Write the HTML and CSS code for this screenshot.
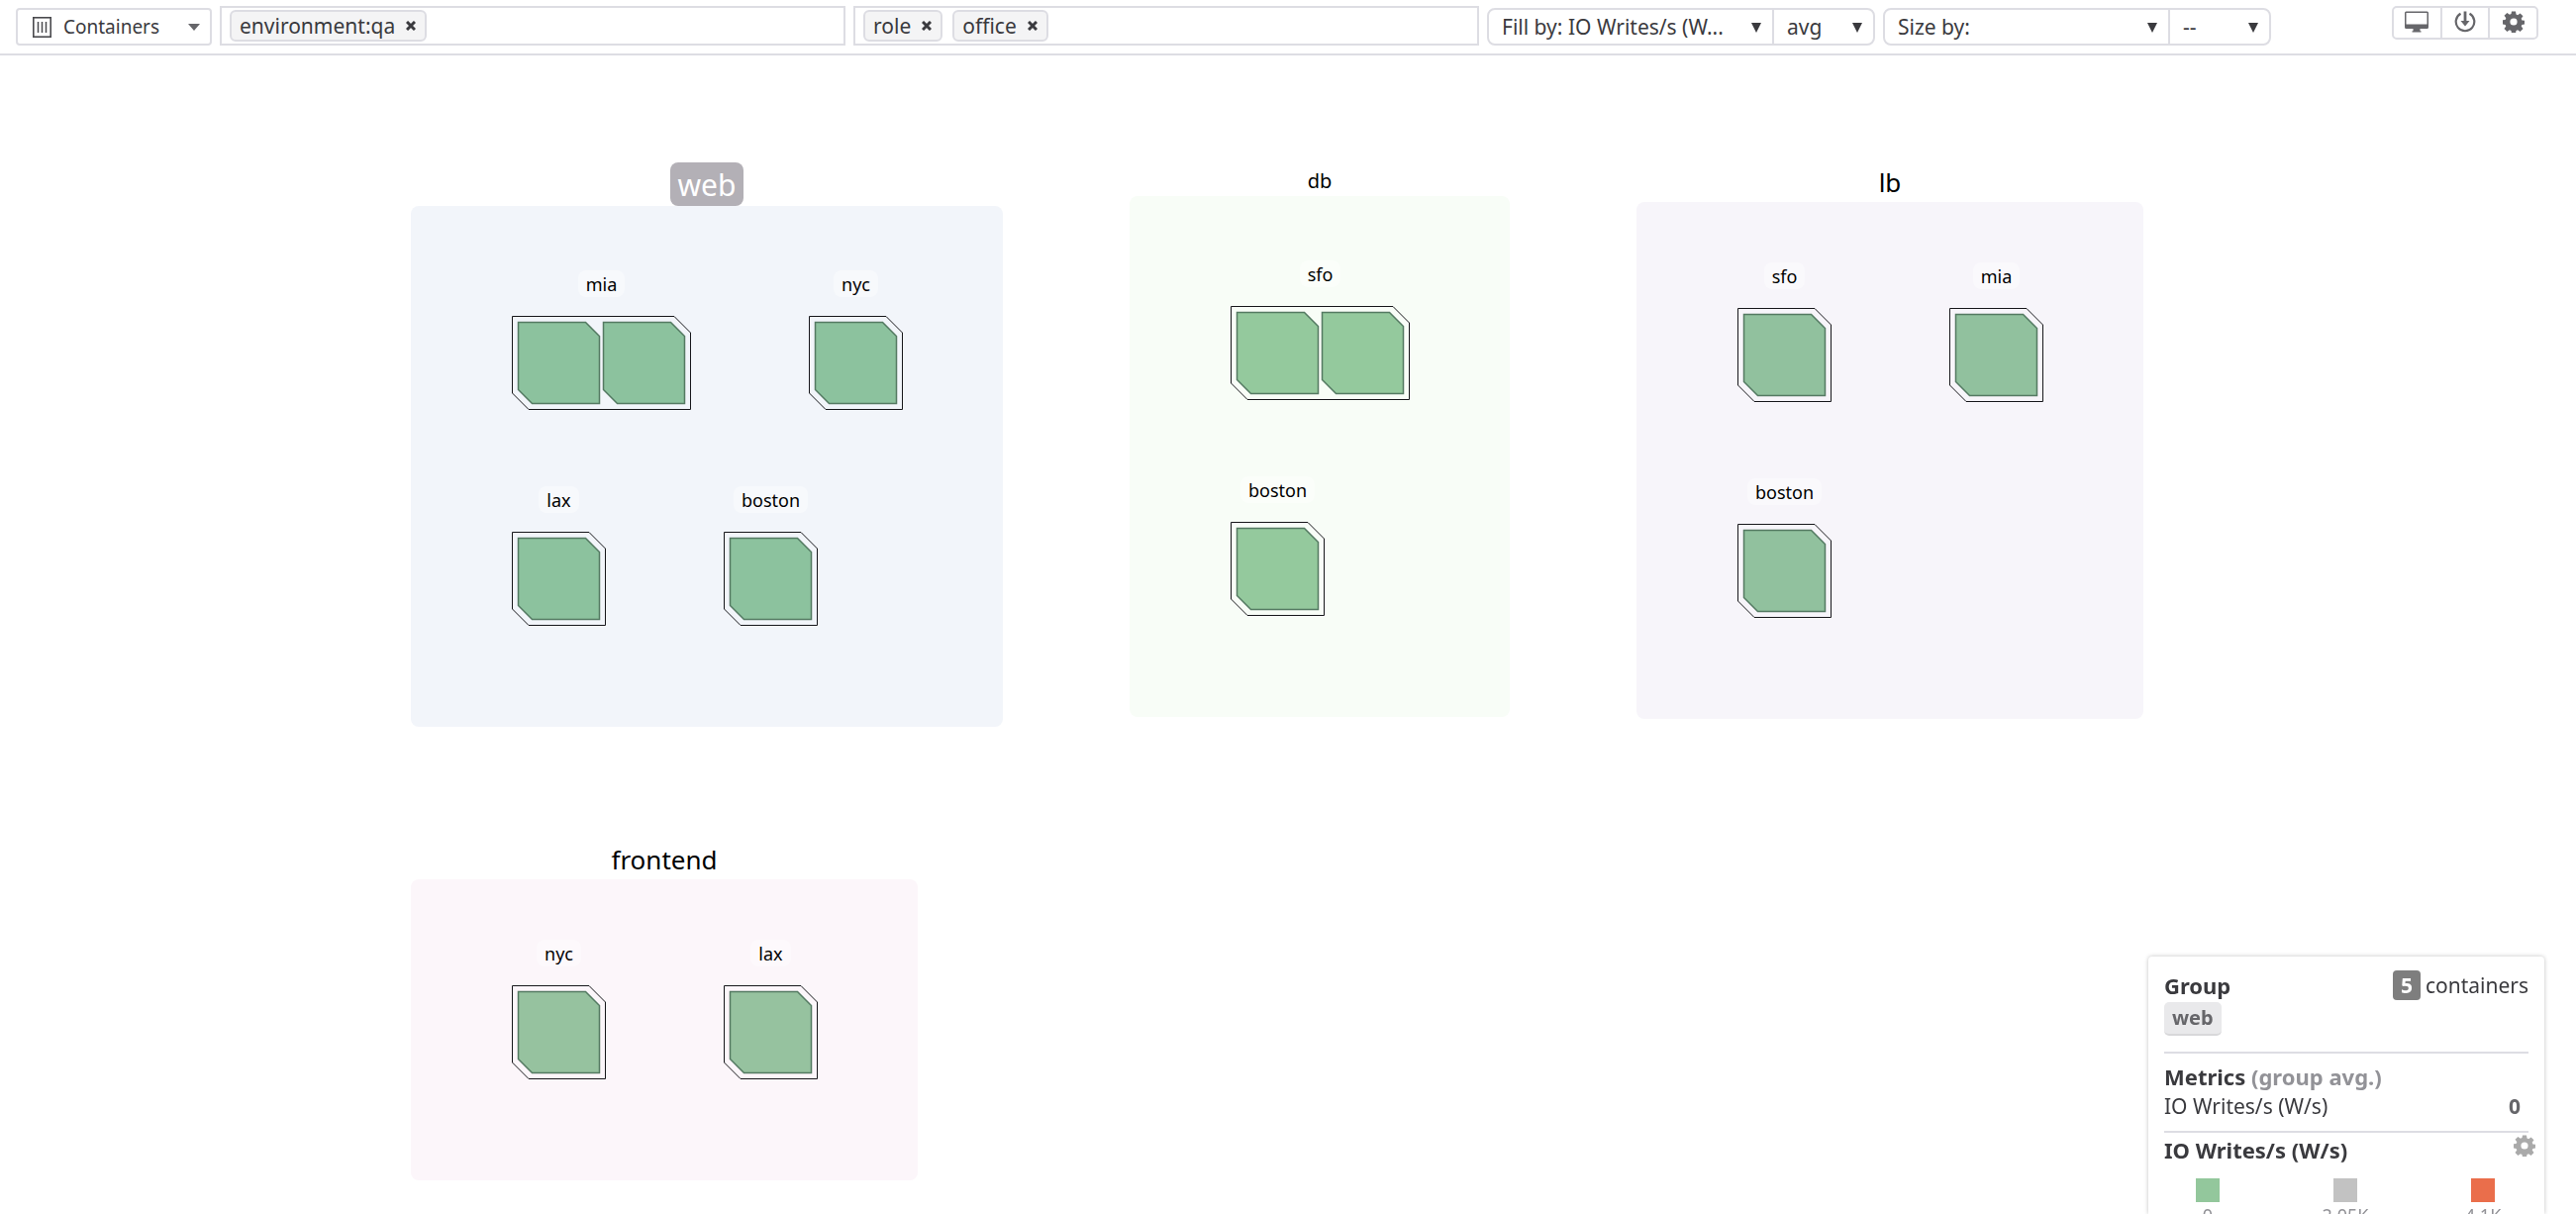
FILE: index.html
```html
<!DOCTYPE html>
<html lang="en">
<head>
<meta charset="utf-8">
<title>Container map</title>
<link rel="stylesheet" href="styles.css">
</head>
<body>
<svg class="defs" aria-hidden="true">
  <symbol id="tile" viewBox="0 0 95 95">
    <path class="frame" d="M.5 .5H78L94.5 17V94.5H17L.5 78Z"/>
    <path class="cell" d="M6.5 6.5H74.5L88.5 20.5V88.5H20.5L6.5 74.5Z"/>
  </symbol>
  <symbol id="tile2" viewBox="0 0 181 95">
    <path class="frame" d="M.5 .5H164L180.5 17V94.5H17L.5 78Z"/>
    <path class="cell" d="M6.5 6.5H74.5L88.5 20.5V88.5H20.5L6.5 74.5ZM92.5 6.5H160.5L174.5 20.5V88.5H106.5L92.5 74.5Z"/>
  </symbol>
  <symbol id="gear" viewBox="0 0 22 22">
    <path fill="currentColor" fill-rule="evenodd" d="M9 .5h4l.5 3 1.6.7 2.5-1.8 2.9 2.9-1.8 2.5.7 1.6 3 .5v3.600l-3 .5-.7 1.600 1.800 2.500-2.900 2.900-2.500-1.800-1.600.7-.5 3H9l-.5-3-1.600-.7-2.500 1.800-2.900-2.900 1.800-2.500-.7-1.600-3-.5V9.400l3-.5.7-1.600-1.800-2.500 2.900-2.900 2.500 1.800 1.600-.7ZM11 7.400a3.600 3.600 0 1 0 0 7.200 3.600 3.600 0 0 0 0-7.200Z"/>
  </symbol>
</svg>

<header class="toolbar">
  <button class="entity" type="button">
    <svg width="19" height="21" viewBox="0 0 19 21" fill="none" stroke="#4a4a4e"><rect x=".8" y=".8" width="17.400" height="19.400" stroke-width="1.600"/><path d="M5.500 5v11M9.500 5v11M13.500 5v11" stroke-width="1.500"/></svg>
    <span class="entity-name">Containers</span>
    <svg width="12" height="7" viewBox="0 0 12 7"><path d="M0 0h12L6 7Z" fill="#66666a"/></svg>
  </button>

  <div class="filter">
    <span class="chip">environment:qa <button type="button" aria-label="Remove environment:qa"><svg width="10" height="10" viewBox="0 0 10 10"><path d="M1 1l8 8M9 1L1 9"/></svg></button></span>
    <input type="text" aria-label="Filter by">
  </div>
  <div class="filter">
    <span class="chip">role <button type="button" aria-label="Remove role"><svg width="10" height="10" viewBox="0 0 10 10"><path d="M1 1l8 8M9 1L1 9"/></svg></button></span>
    <span class="chip">office <button type="button" aria-label="Remove office"><svg width="10" height="10" viewBox="0 0 10 10"><path d="M1 1l8 8M9 1L1 9"/></svg></button></span>
    <input type="text" aria-label="Group by">
  </div>

  <div class="pair">
    <div class="pick metric"><select aria-label="Fill by"><option>Fill by: IO Writes/s (W...</option></select></div>
    <div class="pick"><select aria-label="Fill aggregation"><option>avg</option></select></div>
  </div>
  <div class="pair">
    <div class="pick metric"><select aria-label="Size by"><option>Size by:</option></select></div>
    <div class="pick"><select aria-label="Size aggregation"><option>--</option></select></div>
  </div>

  <div class="actions">
    <button type="button" aria-label="Full screen"><svg width="24" height="22" viewBox="0 0 24 22"><path fill="currentColor" fill-rule="evenodd" d="M1.500 .5h21a1.500 1.500 0 0 1 1.500 1.500v14.500a1.500 1.500 0 0 1-1.500 1.500H15.500v2.200h1V21.500h-9v-1.300h1V18h-7A1.500 1.500 0 0 1 0 16.500V2A1.500 1.500 0 0 1 1.500 .5ZM1.500 2v11.500h21V2Z"/></svg></button>
    <button type="button" aria-label="Save"><svg width="22" height="22" viewBox="0 0 22 22" fill="none" stroke="currentColor"><path d="M6.500 2.800a9.300 9.300 0 1 0 9 0" stroke-width="2.200"/><path d="M11 .5v11" stroke-width="2.800"/><path d="M6.500 10h9L11 15.500Z" fill="currentColor" stroke="none"/></svg></button>
    <button type="button" aria-label="Settings"><svg width="22" height="22"><use href="#gear"/></svg></button>
  </div>
</header>

<main class="map">
  <section class="group web">
    <h2 class="selected">web</h2>
    <div class="body">
      <div class="row">
        <figure><figcaption>mia</figcaption><svg width="181" height="95"><use href="#tile2"/></svg></figure>
        <figure><figcaption>nyc</figcaption><svg width="95" height="95"><use href="#tile"/></svg></figure>
      </div>
      <div class="row">
        <figure><figcaption>lax</figcaption><svg width="95" height="95"><use href="#tile"/></svg></figure>
        <figure><figcaption>boston</figcaption><svg width="95" height="95"><use href="#tile"/></svg></figure>
      </div>
    </div>
  </section>
  <section class="group db">
    <h2>db</h2>
    <div class="body">
      <div class="row">
        <figure><figcaption>sfo</figcaption><svg width="181" height="95"><use href="#tile2"/></svg></figure>
      </div>
      <div class="row">
        <figure><figcaption>boston</figcaption><svg width="95" height="95"><use href="#tile"/></svg></figure>
      </div>
    </div>
  </section>
  <section class="group lb">
    <h2>lb</h2>
    <div class="body">
      <div class="row">
        <figure><figcaption>sfo</figcaption><svg width="95" height="95"><use href="#tile"/></svg></figure>
        <figure><figcaption>mia</figcaption><svg width="95" height="95"><use href="#tile"/></svg></figure>
      </div>
      <div class="row">
        <figure><figcaption>boston</figcaption><svg width="95" height="95"><use href="#tile"/></svg></figure>
      </div>
    </div>
  </section>
  <section class="group frontend">
    <h2>frontend</h2>
    <div class="body">
      <div class="row">
        <figure><figcaption>nyc</figcaption><svg width="95" height="95"><use href="#tile"/></svg></figure>
        <figure><figcaption>lax</figcaption><svg width="95" height="95"><use href="#tile"/></svg></figure>
      </div>
    </div>
  </section>
</main>

<aside class="panel">
  <div class="summary">
    <div>
      <h3>Group</h3>
      <span class="tag">web</span>
    </div>
    <div class="count"><b>5</b> containers</div>
  </div>
  <div class="metrics">
    <h3>Metrics <span class="muted">(group avg.)</span></h3>
    <div class="metric-row"><span>IO Writes/s (W/s)</span><b>0</b></div>
  </div>
  <div class="legend-head">
    <h3>IO Writes/s (W/s)</h3>
    <button type="button" aria-label="Legend settings"><svg width="22" height="22"><use href="#gear"/></svg></button>
  </div>
  <ul class="legend">
    <li class="low">0</li>
    <li class="mid">2.05K</li>
    <li class="high">4.1K</li>
  </ul>
</aside>
</body>
</html>
```
FILE: styles.css
```css
* {
  box-sizing: border-box;
}

body {
  margin: 0;
  min-height: 100vh;
  background: #fff;
  color: #3a3a3e;
  font: 21px/30px "Noto Sans", sans-serif;
}

h2, h3, figure, ul {
  margin: 0;
  padding: 0;
}

button, input, select {
  margin: 0;
  padding: 0;
  border: 0;
  background: none;
  color: inherit;
  font: inherit;
}

svg {
  display: block;
  flex: none;
}

.defs {
  position: absolute;
  width: 0;
  height: 0;
}

/* Toolbar */
.toolbar {
  display: flex;
  align-items: flex-start;
  gap: 8px;
  height: 56px;
  padding: 6px 38px 0 16px;
  border-bottom: 2px solid #dddde3;
}

.entity {
  display: flex;
  align-items: center;
  gap: 12px;
  flex: none;
  width: 198px;
  height: 38px;
  margin-top: 2px;
  padding: 0 10px 0 15px;
  border: 2px solid #dddde3;
  border-radius: 4px;
}

.entity-name {
  flex: 1;
  font-size: 19px;
  text-align: left;
}

.filter {
  display: flex;
  align-items: center;
  gap: 10px;
  flex: 1 1 0;
  min-width: 0;
  height: 40px;
  padding: 0 8px;
  border: 2px solid #dddde3;
}

.filter input {
  flex: 1;
  min-width: 0;
}

.chip {
  display: flex;
  align-items: center;
  gap: 11px;
  height: 32px;
  padding: 0 9px 0 8px;
  border: 2px solid #dddde3;
  border-radius: 6px;
  background: #f4f4f5;
}

.chip path {
  stroke: #3a3a3e;
  stroke-width: 3;
}

.pair {
  display: flex;
  flex: none;
  width: 392px;
  height: 38px;
  margin-top: 2px;
  border: 2px solid #dddde3;
  border-radius: 8px;
}

.pick {
  position: relative;
  flex: 1;
}

.pick.metric {
  flex: none;
  width: 288px;
  border-right: 2px solid #dddde3;
}

.pick select {
  width: 100%;
  height: 34px;
  padding-left: 13px;
  appearance: none;
}

.pick::after {
  content: "";
  position: absolute;
  top: 13px;
  right: 11px;
  width: 10px;
  height: 10px;
  background: #3a3a3e;
  clip-path: polygon(0 0, 100% 0, 50% 100%);
  pointer-events: none;
}

.actions {
  display: flex;
  flex: none;
  width: 148px;
  height: 34px;
  margin-left: 114px;
  border: 2px solid #dddde3;
  border-radius: 5px;
  color: #66666a;
}

.actions button {
  display: flex;
  align-items: flex-start;
  justify-content: center;
  flex: 1;
  padding-top: 3px;
}

.actions button + button {
  border-left: 2px solid #dddde3;
}

/* Map of groups */
.map {
  display: grid;
  grid-template-columns: auto auto auto;
  justify-content: center;
  align-items: start;
  justify-items: start;
  column-gap: 128px;
  row-gap: 114px;
  padding: 108px 22px 24px 0;
}

.group {
  display: flex;
  flex-direction: column;
  align-items: center;
  color: #000;
}

.group h2 {
  font-size: 26px;
  line-height: 40px;
  font-weight: 400;
}

.group.db h2 {
  padding-top: 4px;
  font-size: 20px;
  line-height: 30px;
}

.group h2.selected {
  padding: 2px 8px 0;
  border-radius: 8px;
  background: #b3b0b6;
  color: #fff;
  font-size: 30px;
  line-height: 42px;
}

.body {
  display: flex;
  flex-direction: column;
  gap: 77px;
  padding: 61px 101px 102px 102px;
  border-radius: 8px;
}

.web .body, .db .body {
  padding-top: 65px;
}

.row {
  display: flex;
  gap: 119px;
}

figure {
  display: flex;
  flex-direction: column;
  align-items: center;
  gap: 19px;
}

figcaption {
  margin: 0 -8px;
  padding: 1px 8px 0;
  border-radius: 8px;
  background: rgba(255, 255, 255, 0.4);
  font-size: 18px;
  line-height: 26px;
}

.frame {
  fill: none;
  stroke: #17171b;
}

.cell {
  stroke: #547a62;
  stroke-width: 1.5;
}

.web .body { background: #f2f5fa; fill: #8cc29e; }
.db .body { background: #f8fdf7; fill: #94c99d; }
.lb .body { background: #f7f5fa; fill: #91c19e; }
.frontend .body { background: #fcf6fa; fill: #96c29f; }

/* Details panel, docked to the lower right corner */
.panel {
  position: fixed;
  right: 32px;
  bottom: 0;
  width: 400px;
  height: 260px;
  padding: 14px 16px 0;
  overflow: hidden;
  border-radius: 4px 4px 0 0;
  background: #fff;
  box-shadow: 0 0 4px rgba(0, 0, 0, 0.25);
}

.panel h3 {
  font-size: 22px;
  line-height: 30px;
}

.summary {
  display: flex;
  justify-content: space-between;
  align-items: flex-start;
  height: 84px;
  border-bottom: 2px solid #dddde3;
}

.tag {
  display: block;
  width: max-content;
  margin-top: 2px;
  padding: 0 8px;
  border-bottom: 2px solid #d8d8da;
  border-radius: 5px;
  background: #e9e9eb;
  color: #66666a;
  font-size: 20px;
  font-weight: 700;
  line-height: 32px;
}

.count {
  display: flex;
  gap: 5px;
}

.count b {
  width: 28px;
  border-radius: 4px;
  background: #7e7e7e;
  color: #fff;
  text-align: center;
}

.metrics {
  height: 80px;
  padding-top: 8px;
  border-bottom: 2px solid #dddde3;
}

.muted {
  color: #929297;
}

.metric-row {
  display: flex;
  justify-content: space-between;
  padding-right: 8px;
}

.metric-row b {
  color: #66666a;
}

.legend-head {
  display: flex;
  justify-content: space-between;
  align-items: flex-start;
  margin-right: -7px;
  padding-top: 2px;
}

.legend-head button {
  color: #aaa;
}

.legend {
  display: flex;
  justify-content: space-between;
  padding: 14px 22px 0 20px;
  list-style: none;
}

.legend li {
  display: flex;
  flex-direction: column;
  align-items: center;
  width: 48px;
  color: #929297;
  font-size: 18px;
  line-height: 26px;
}

.legend li::before {
  content: "";
  width: 24px;
  height: 24px;
}

.low::before { background: #93c79c; }
.mid::before { background: #c2c2c2; }
.high::before { background: #ea6e4b; }
```
